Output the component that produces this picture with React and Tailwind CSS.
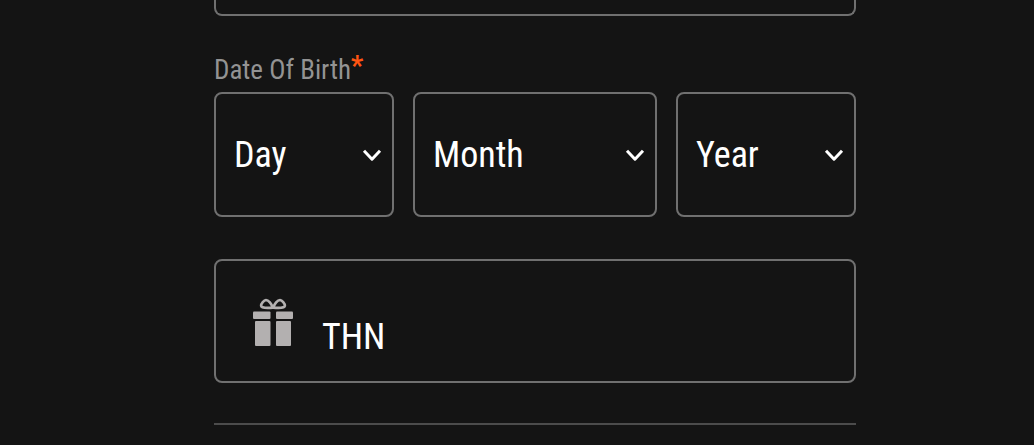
import { useState } from 'react'

const months = ['January', 'February', 'March', 'April', 'May', 'June', 'July', 'August', 'September', 'October', 'November', 'December']
const days = Array.from({ length: 31 }, (_, i) => String(i + 1))
const years = Array.from({ length: 80 }, (_, i) => String(2005 - i))

function DateSelect({ id, label, options, value, onChange }) {
  return (
    <div className="relative">
      <select
        id={id}
        aria-label={label}
        value={value}
        onChange={e => onChange(e.target.value)}
        className="block w-full h-[125px] appearance-none rounded-lg border-2 border-[#707070] bg-[#141414] pl-[18px] pr-10 text-[36px] text-white"
      >
        <option value="">{label}</option>
        {options.map(o => <option key={o} value={o}>{o}</option>)}
      </select>
      <svg
        className="pointer-events-none absolute right-3 top-1/2 -translate-y-1/2 w-5 h-3"
        viewBox="0 0 20 12" fill="none" stroke="white" strokeWidth="3"
      >
        <path d="M2 1.8L10 10.2L18 1.8" strokeLinejoin="round" />
      </svg>
    </div>
  )
}

function GiftIcon() {
  return (
    <svg className="w-10 h-12 shrink-0" viewBox="0 0 40 48" fill="#b3b0b0" aria-hidden="true">
      <g fill="none" stroke="#b3b0b0" strokeWidth="2.6" strokeLinejoin="round">
        <path d="M19.8 9.6C18.5 6 15.5 2 13 2C11 2.2 8 5.6 8.1 7.8C8.4 9.8 14.5 10.2 19.8 9.6Z" />
        <path d="M20.2 9.6C21.5 6 24.5 2 27 2C29 2.2 32 5.6 31.9 7.8C31.6 9.8 25.5 10.2 20.2 9.6Z" />
      </g>
      <rect x="0" y="13.5" width="17.5" height="7.5" rx="1" />
      <rect x="23" y="13.5" width="17" height="7.5" rx="1" />
      <rect x="2" y="23" width="15.5" height="25" rx="1" />
      <rect x="23" y="23" width="15" height="25" rx="1" />
    </svg>
  )
}

export default function App() {
  const [form, setForm] = useState({ previous: '', day: '', month: '', year: '', code: 'THN' })

  function change(k, v) { setForm(p => ({ ...p, [k]: v })) }

  return (
    <main className="min-h-screen bg-[#141414] pl-[214px] pr-[178px] font-['Roboto_Condensed','Roboto',sans-serif]">
      <form>
        <input
          aria-label="Previous field"
          value={form.previous}
          onChange={e => change('previous', e.target.value)}
          className="block w-full h-4 rounded-b-lg border-2 border-t-0 border-[#707070] bg-transparent"
        />

        <div className="pt-9">
          <label htmlFor="day" className="flex h-10 items-start text-[27px] leading-9 text-[#939393]">
            Date Of Birth<span className="text-[#ff5512] leading-7 font-bold">*</span>
          </label>
          <div className="grid grid-cols-[45fr_61fr_45fr] gap-[19px]">
            <DateSelect id="day" label="Day" options={days} value={form.day} onChange={v => change('day', v)} />
            <DateSelect id="month" label="Month" options={months} value={form.month} onChange={v => change('month', v)} />
            <DateSelect id="year" label="Year" options={years} value={form.year} onChange={v => change('year', v)} />
          </div>
        </div>

        <label className="mt-[42px] flex h-[124px] items-center gap-[29px] rounded-lg border-2 border-[#707070] pl-[37px] pr-9 pt-[2px]">
          <GiftIcon />
          <input
            aria-label="Gift code"
            value={form.code}
            onChange={e => change('code', e.target.value)}
            className="h-full min-w-0 flex-1 bg-transparent pt-[30px] text-[36px] text-white outline-none"
          />
        </label>

        <hr className="mt-10 border-t-2 border-[#4c4c4c]" />
      </form>
    </main>
  )
}
